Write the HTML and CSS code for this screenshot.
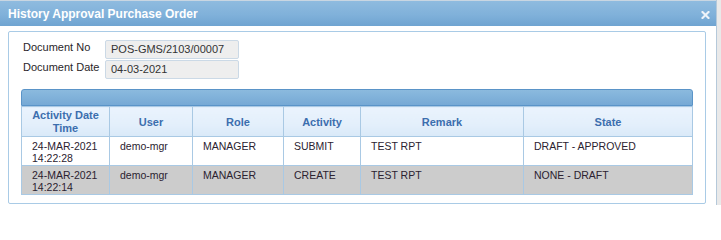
FILE: index.html
```html
<!DOCTYPE html>
<html>
<head>
<meta charset="utf-8">
<link rel="stylesheet" href="styles.css">
</head>
<body>
<div class="dialog">
  <div class="titlebar">
    <span class="title">History Approval Purchase Order</span>
    <svg class="close" width="9" height="8" viewBox="0 0 9 8"><path d="M1.5 1L7.5 7M7.5 1L1.5 7" stroke="#eef3f9" stroke-width="2.1" stroke-linecap="square"/></svg>
  </div>
  <div class="content">
    <div class="panel">
      <div class="form">
        <div class="field">
          <span class="label">Document No</span>
          <span class="input">POS-GMS/2103/00007</span>
        </div>
        <div class="field">
          <span class="label">Document Date</span>
          <span class="input">04-03-2021</span>
        </div>
      </div>
      <div class="grid">
        <div class="caption"></div>
        <table>
          <colgroup>
            <col style="width:88px"><col style="width:83px"><col style="width:91px"><col style="width:77px"><col style="width:163px"><col>
          </colgroup>
          <thead>
            <tr><th>Activity Date<br>Time</th><th>User</th><th>Role</th><th>Activity</th><th>Remark</th><th>State</th></tr>
          </thead>
          <tbody>
            <tr><td>24-MAR-2021<br>14:22:28</td><td>demo-mgr</td><td>MANAGER</td><td>SUBMIT</td><td>TEST RPT</td><td>DRAFT - APPROVED</td></tr>
            <tr class="alt"><td>24-MAR-2021<br>14:22:14</td><td>demo-mgr</td><td>MANAGER</td><td>CREATE</td><td>TEST RPT</td><td>NONE - DRAFT</td></tr>
          </tbody>
        </table>
      </div>
    </div>
  </div>
</div>
</body>
</html>
```
FILE: styles.css
```css
html, body {
  margin: 0;
  padding: 0;
}
html {
  background: #ffffff;
}
body {
  background: #e9e9e9;
  font-family: "Liberation Sans", Arial, sans-serif;
  font-size: 10.5px;
  color: #222;
  width: 721px;
  height: 205px;
  overflow: hidden;
}
.dialog {
  width: 716px;
  height: 205px;
  background: #fff;
  border-right: 1px solid #b5c9da;
  box-sizing: content-box;
}
.titlebar {
  height: 26px;
  background: linear-gradient(#8fbbdf, #80b1da 55%, #6fa4d1);
  border-top: 1px solid #c9d6e2;
  box-sizing: border-box;
  display: flex;
  align-items: center;
  padding: 0 8px 0 8px;
  position: relative;
}
.title {
  color: #fff;
  font-weight: bold;
  font-size: 12px;
  padding-top: 1px;
}
.close {
  position: absolute;
  right: 6px;
  top: 10px;
}
.content {
  padding: 5px 10px 0 8px;
}
.panel {
  border: 1px solid #a9cbe6;
  border-radius: 2px;
  height: 173px;
  box-sizing: border-box;
  padding: 8px 0 0 12px;
}
.form {
  display: flex;
  flex-direction: column;
  gap: 1px;
}
.field {
  display: flex;
  align-items: flex-start;
}
.label {
  width: 82px;
  padding-left: 2px;
  line-height: 14px;
  font-size: 11px;
  color: #2a1f2a;
}
.input {
  width: 134px;
  height: 19px;
  box-sizing: border-box;
  background: #eeeeee;
  border: 1px solid #cbd9e6;
  border-radius: 2px;
  padding: 0 0 0 5px;
  line-height: 17px;
  font-size: 11px;
  color: #333;
}
.grid {
  margin-top: 10px;
  width: 672px;
}
.caption {
  height: 17px;
  box-sizing: border-box;
  border: 1px solid #5a94c8;
  border-radius: 3px 3px 0 0;
  background: linear-gradient(#8bbade, #76a9d5);
}
table {
  border-collapse: collapse;
  table-layout: fixed;
  width: 672px;
}
th, td {
  border: 1px solid #a9c9e4;
  vertical-align: top;
}
th {
  height: 30px;
  box-sizing: border-box;
  background: linear-gradient(#eaf3fd, #e3effb 60%, #d9e9f8);
  color: #3c6eae;
  font-weight: bold;
  font-size: 11px;
  line-height: 13px;
  text-align: center;
  vertical-align: middle;
  padding: 1px 2px 0;
}
td {
  height: 29px;
  box-sizing: border-box;
  padding: 3px 4px 0 10px;
  line-height: 12.2px;
  font-size: 10.5px;
  color: #2b2230;
  background: #fff;
}
tr.alt td {
  background: #cccccc;
}
```
